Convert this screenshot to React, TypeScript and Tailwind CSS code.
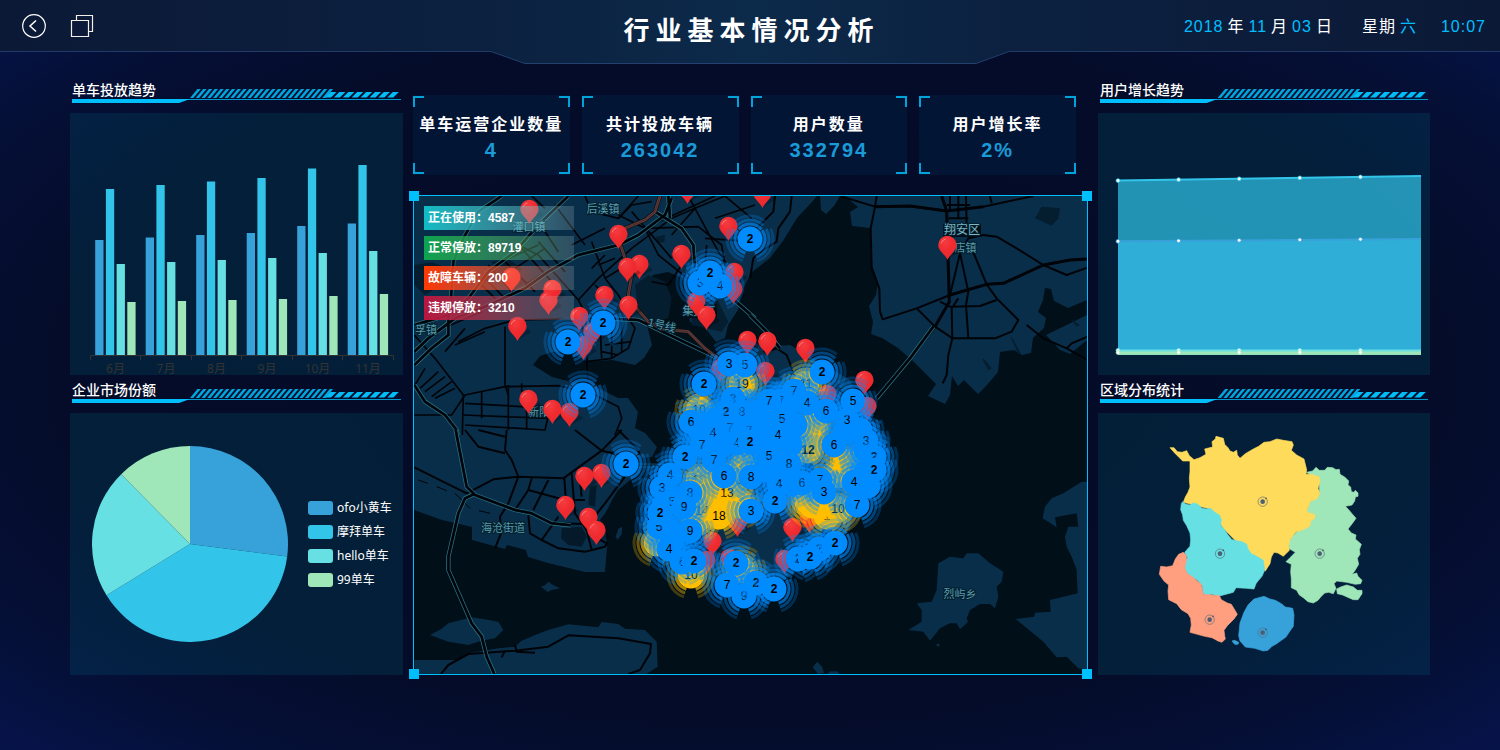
import React from "react";

const ZOOMED = "scale(0.333333)";

/* ---------- shared pieces ---------- */

function TitleRule() {
  const long = Array.from({ length: 24 }, (_, i) => 118 + i * 5.75);
  const short = Array.from({ length: 8 }, (_, i) => 253 + i * 8.9);
  return (
    <svg viewBox="0 0 329 15" preserveAspectRatio="none" className="block h-[15px] w-full" aria-hidden="true">
      {long.map((x) => (
        <path key={x} d={`M${x} 9 L${x + 7.5} 0 H${x + 10.8} L${x + 3.3} 9 Z`} fill="#00a6dd" />
      ))}
      {short.map((x) => (
        <path key={x} d={`M${x} 8.5 L${x + 5.5} 3 H${x + 11.5} L${x + 6} 8.5 Z`} fill="#00bdf8" />
      ))}
      <rect x="0" y="10" width="329" height="1" fill="#0398cb" />
      <path d="M0 10 H118 L107 14 H0 Z" fill="#00bfff" />
    </svg>
  );
}

function Panel({ title, children }: { title: string; children: React.ReactNode }) {
  return (
    <section className="flex flex-col">
      <div className="flex h-[38px] flex-col px-[2px] pt-[5px]">
        <h2 className="h-[9px] text-[14px] leading-[20px] font-medium text-white">{title}</h2>
        <TitleRule />
      </div>
      <div className="flex h-[262px] items-center bg-[#00ffff]/8">{children}</div>
    </section>
  );
}

/* ---------- header ---------- */

const hi = "text-[#00bfff]";

function Header() {
  return (
    <header className="relative h-16">
      <div className="absolute inset-0 flex">
        <div className="h-[52px] flex-1 border-b border-[#213a68] bg-linear-to-r from-[#0b1936] to-[#0c2140]" />
        <svg viewBox="0 0 518 64" preserveAspectRatio="none" className="h-16 w-[518px]" aria-hidden="true">
          <defs>
            <linearGradient id="head" x1="0" x2="1" y1="0" y2="0">
              <stop offset="0" stopColor="#0c2140" />
              <stop offset="0.5" stopColor="#0c2a4a" />
              <stop offset="1" stopColor="#0c2140" />
            </linearGradient>
          </defs>
          <path d="M0 0 H518 V51 L485 63.5 H34 L0 51 Z" fill="url(#head)" />
          <path d="M0 51.5 L34 63.5 H485 L518 51.5" fill="none" stroke="#24406f" />
        </svg>
        <div className="h-[52px] flex-1 border-b border-[#213a68] bg-linear-to-l from-[#0b1936] to-[#0c2140]" />
      </div>
      <div className="relative grid h-[52px] grid-cols-[1fr_auto_1fr] items-center">
        <div className="flex items-center gap-6 pl-[22px]">
          <button aria-label="返回" className="block">
            <svg width="24" height="24" viewBox="0 0 24 24" fill="none" stroke="#fff" strokeWidth="1.2">
              <circle cx="12" cy="12" r="11.3" />
              <path d="M14 6.5 L8 12 L14 17.5" strokeWidth="1.5" />
            </svg>
          </button>
          <button aria-label="窗口" className="block">
            <svg width="24" height="24" viewBox="0 0 24 24" fill="none" stroke="#f4f0e6" strokeWidth="1.2">
              <path d="M1.5 6.5 H18.5 V22.5 H1.5 Z M6.5 6.5 V1.5 H22.5 V17.5 H18.5" />
            </svg>
          </button>
        </div>
        <h1 className="pt-[10px] pl-[3px] text-[26px] leading-[38px] font-bold tracking-[6px] text-white">行业基本情况分析</h1>
        <div className="flex justify-end pt-[2px] pr-[14px] text-[16px] leading-[24px] tracking-[1px] whitespace-nowrap text-white">
          <p className="flex gap-1 pr-[29px]">
            <span className={hi}>2018</span>
            <span>年</span>
            <span className={hi}>11</span>
            <span>月</span>
            <span className={hi}>03</span>
            <span>日</span>
          </p>
          <p className="flex gap-1 pr-6">
            <span>星期</span>
            <span className={hi}>六</span>
          </p>
          <p className={hi}>10:07</p>
        </div>
      </div>
    </header>
  );
}

/* ---------- bar chart ---------- */

const palette = ["#37a2da", "#32c5e9", "#67e0e3", "#9fe6b8"];
const months: [string, number[]][] = [
  ["6月", [115, 166, 91, 53]],
  ["7月", [117.5, 170, 93, 54]],
  ["8月", [120, 173.5, 95, 55]],
  ["9月", [122, 177, 97, 56]],
  ["10月", [129, 186.5, 102, 59]],
  ["11月", [131.5, 190, 104, 61]],
];

function BarChart() {
  return (
    <svg viewBox="0 0 333 262" className="block h-full w-full overflow-visible">
      {months.map(([m, v], i) => (
        <g key={m}>
          {v.map((h, k) => (
            <rect key={k} x={25.2 + i * 50.5 + k * 10.7} y={242 - h} width="8.3" height={h} fill={palette[k]} />
          ))}
          <text
            x={45.5 + i * 50.5}
            y="260"
            textAnchor="middle"
            fill="#333"
            fontSize="12"
            className="font-['Noto_Sans','Noto_Sans_CJK_SC',sans-serif]"
          >
            {m}
          </text>
        </g>
      ))}
      <path
        d="M20.5 247 V242.5 H323.5 V247 M70.5 242 V247 M121.5 242 V247 M171.5 242 V247 M222.5 242 V247 M272.5 242 V247"
        fill="none"
        stroke="#333"
      />
    </svg>
  );
}

/* ---------- pie ---------- */

const shares: [string, number, string][] = [
  ["ofo小黄车", 97.4, "bg-[#37a2da]"],
  ["摩拜单车", 141, "bg-[#32c5e9]"],
  ["hello单车", 77, "bg-[#67e0e3]"],
  ["99单车", 44.6, "bg-[#9fe6b8]"],
];

function PieChart() {
  let a = 0;
  const at = (deg: number) => {
    const r = (deg * Math.PI) / 180;
    return `${98 + 98 * Math.sin(r)} ${98 - 98 * Math.cos(r)}`;
  };
  return (
    <>
      <svg viewBox="0 0 196 196" className="ml-[22px] block h-[196px] w-[196px] shrink-0">
        {shares.map(([name, deg], i) => {
          const d = `M98 98 L${at(a)} A98 98 0 0 1 ${at(a + deg)} Z`;
          a += deg;
          return <path key={name} d={d} fill={palette[i]} />;
        })}
      </svg>
      <ul className="ml-5 flex flex-col gap-[10px] font-['Noto_Sans','Noto_Sans_CJK_SC',sans-serif] text-[12px] leading-[14px] whitespace-nowrap text-white">
        {shares.map(([name, , color]) => (
          <li key={name} className="flex items-center gap-1">
            <span className={`h-[14px] w-[25px] rounded-[3px] ${color}`} />
            {name}
          </li>
        ))}
      </ul>
    </>
  );
}

/* ---------- area chart ---------- */

function AreaChart() {
  const xs = [0, 1, 2, 3, 4].map((i) => 20 + i * 60.6);
  return (
    <svg viewBox="0 0 332 262" className="block h-full w-full">
      <path d="M20 67.5 L323 63 V242 H20 Z" fill="#32c5e9" fillOpacity="0.7" />
      <path d="M20 128.3 L323 126 V242 H20 Z" fill="#2faed8" />
      <path d="M20 237 H323 V242 H20 Z" fill="#9fe6b8" fillOpacity="0.9" />
      <path d="M20 67.5 L323 63" stroke="#32c5e9" strokeWidth="2" />
      <path d="M20 128.3 L323 126" stroke="#37a2da" strokeWidth="2" />
      <path d="M20 237.5 H323" stroke="#67e0e3" strokeWidth="2" />
      <path d="M20 239.8 H323" stroke="#9fe6b8" strokeWidth="2" />
      {xs.map((x, i) => (
        <g key={x} fill="#fff">
          <circle cx={x} cy={67.6 - i * 0.9} r="1.9" stroke="#32c5e9" strokeWidth="0.8" />
          <circle cx={x} cy={128.3 - i * 0.5} r="1.9" stroke="#37a2da" strokeWidth="0.8" />
          <circle cx={x} cy="237.3" r="1.9" stroke="#67e0e3" strokeWidth="0.8" />
          <circle cx={x} cy="239.5" r="1.9" stroke="#9fe6b8" strokeWidth="0.8" />
        </g>
      ))}
    </svg>
  );
}

/* ---------- district map ---------- */

const districts: [string, string][] = [
  [
    "#9fe6b8",
    "M650 292 L668 288 678 277 688 286 704 286 712 277 728 278 738 284 748 283 750 298 764 306 776 318 774 330 782 336 784 350 792 352 796 346 804 354 804 364 796 366 794 378 786 390 766 394 776 404 786 416 798 430 788 444 774 462 784 474 798 480 796 492 814 508 808 524 810 538 802 550 806 568 794 588 786 598 800 594 804 604 816 616 812 626 796 628 770 622 740 618 732 626 738 640 730 656 716 652 704 654 692 666 684 676 670 684 654 680 640 668 628 660 620 646 604 638 604 612 602 590 604 568 588 560 600 548 616 532 596 520 596 498 620 470 650 450 660 430 650 408 660 380 688 360 688 320 660 300 Z",
  ],
  ["#9fe6b8", "M740 642 L752 636 770 630 790 636 802 646 816 646 816 656 804 674 790 674 776 668 758 660 742 656 Z"],
  [
    "#ffdb5c",
    "M240 218 L252 218 262 230 276 232 290 227 298 242 312 254 330 248 348 238 344 222 368 216 366 200 376 192 378 184 400 190 404 208 414 218 420 228 430 232 440 226 442 240 450 250 466 236 490 222 506 214 522 202 540 200 560 192 580 196 606 200 610 210 604 226 620 240 642 252 650 284 648 298 664 298 688 306 690 320 684 340 690 356 680 372 662 378 656 392 650 408 656 414 674 418 674 430 662 438 660 452 648 460 634 466 618 470 600 494 596 512 598 526 580 544 564 534 552 532 544 546 540 566 526 588 516 580 400 460 360 402 280 382 286 366 294 352 300 336 298 310 300 290 300 258 278 258 266 246 254 234 Z",
  ],
  [
    "#67e0e3",
    "M278 380 L288 388 300 390 310 384 324 388 336 400 350 402 362 400 374 412 388 420 394 434 392 450 404 464 414 480 426 494 444 498 456 500 470 508 474 522 484 536 500 544 520 556 524 586 516 604 504 618 498 626 492 642 470 640 438 638 430 652 400 660 384 664 364 658 350 662 340 656 336 630 322 616 306 606 292 596 284 580 286 560 292 548 284 532 300 514 302 494 300 474 290 452 280 436 278 420 272 404 274 386 Z",
  ],
  [
    "#ff9f7f",
    "M280 532 L288 540 290 552 284 578 292 596 308 606 322 618 334 628 340 658 364 660 388 662 394 674 412 684 424 688 434 704 442 718 432 732 412 752 402 766 404 782 406 792 396 802 384 798 366 788 344 784 322 778 300 772 304 750 302 730 294 716 274 704 260 686 236 674 234 648 236 630 222 618 208 598 212 574 230 576 248 572 256 552 266 538 Z",
  ],
  [
    "#37a2da",
    "M522 664 L540 672 556 676 574 686 586 696 608 700 612 720 610 754 600 768 588 786 560 806 546 814 534 826 520 828 494 820 466 816 450 798 446 782 450 744 462 712 474 690 492 672 Z",
  ],
  ["#37a2da", "M426 798 L434 796 446 802 444 808 434 808 Z"],
];
const seats = [
  [518, 380],
  [390, 536],
  [689, 536],
  [359, 734],
  [518, 773],
];

function DistrictMap() {
  return (
    <svg viewBox="0 0 332 262" className="block h-full w-full">
      <g transform={`translate(-8 -38) ${ZOOMED}`}>
        {districts.map(([c, d], i) => (
          <path key={i} d={d} fill={c} stroke={c} strokeWidth="2" strokeLinejoin="round" />
        ))}
        {seats.map(([x, y]) => (
          <g key={`${x}-${y}`}>
            <circle cx={x} cy={y} r="14" fill="none" stroke="#5c6b7c" strokeWidth="2" />
            <circle cx={x} cy={y} r="7" fill="#4f5f73" />
            <circle cx={x + 10} cy={y - 10} r="2.5" fill="#404a5c" />
          </g>
        ))}
      </g>
    </svg>
  );
}

/* ---------- city map ---------- */

const land = [
  "M414 196 H817 L812 202 797 218 783 241 770 258 752 272 742 290 738 310 728 325 725 338 716 342 705 328 690 322 686 300 683 278 668 272 653 275 648 284 637 286 640 302 647 325 652 345 644 358 635 365 612 360 588 362 572 353 552 352 540 356 533 365 552 377 572 382 592 385 618 398 628 398 638 412 635 428 645 433 657 447 652 457 638 458 640 472 618 490 612 500 606 512 600 520 605 527 607 547 605 572 585 572 548 563 528 557 526 550 507 545 505 549 472 540 472 527 442 520 414 510 Z",
  "M820 196 H840 L834 206 826 214 821 210 Z",
  "M845 196 H1087 V300 L1068 308 1054 301 1051 289 1045 288 1043 300 1038 312 1046 318 1044 328 1033 338 1031 353 1022 355 1014 350 1000 352 998 372 987 385 978 394 964 380 958 386 952 376 950 395 945 404 928 396 936 384 930 378 914 362 898 348 882 338 871 334 873 322 869 306 876 295 878 282 871 262 870 228 852 226 850 212 858 207 Z",
  "M1087 315 L1046 335 1060 350 1070 354 1087 340 Z",
  "M722 350 L790 345 850 380 878 440 868 510 830 550 780 582 730 590 690 570 655 540 662 480 690 400 Z",
];

const landSW = [
  "M75 615 L110 596 130 580 200 562 240 568 280 575 295 600 270 625 230 632 190 645 130 635 Z",
  "M408 470 L420 466 430 455 445 466 465 475 440 480 428 486 Z",
  "M28 690 H160 L190 670 280 655 330 650 350 632 390 615 430 600 490 583 580 592 590 576 640 582 660 596 720 600 755 635 758 710 720 735 H28 Z",
  "M632 320 L640 296 652 290 650 312 638 330 Z",
];

const landSE = [
  "M565 400 L600 380 640 385 650 370 685 370 720 400 760 425 755 455 740 470 745 500 735 535 720 522 690 522 660 540 650 565 654 576 630 598 620 580 600 580 570 595 540 632 520 605 475 600 515 575 515 540 500 520 545 515 560 480 Z",
  "M1012 155 L995 155 980 165 940 190 905 205 885 230 878 265 920 292 915 262 980 250 985 290 955 290 945 320 950 350 965 380 980 420 983 490 900 510 902 545 855 548 852 560 797 567 880 635 920 682 950 680 985 715 1012 720 Z",
  "M188 712 L202 695 216 710 222 728 205 733 Z",
  "M232 733 L240 724 262 724 270 733 Z",
  "M558 645 L565 640 570 646 564 650 Z",
];

const waterNW = [
  "M690 300 L730 270 780 290 800 340 790 400 740 410 700 380 Z",
  "M860 290 L930 330 970 410 950 440 860 420 Z",
  "M28 240 L80 232 130 250 110 300 60 330 28 300 Z",
  "M260 230 L310 222 350 250 330 290 280 290 Z",
  "M752 155 L780 150 778 170 760 175 Z",
];
const waterNE = ["M855 100 L875 65 930 70 925 100 905 122 Z", "M700 520 L725 550 715 556 698 525 Z", "M785 455 L812 505 805 508 783 458 Z", "M960 400 L990 420 980 425 Z"];
const coveSW = ["M470 295 L530 290 545 320 530 350 490 345 468 325 Z", "M555 170 L575 165 570 230 550 225 Z"];

const highwaysNW = [
  "M290 33 L220 80 175 160 145 230 138 340",
  "M490 33 L400 120 330 200 250 260 190 340 130 390 28 420",
  "M800 40 L780 90 700 150 640 180 520 210 430 260 360 310 240 365 150 400 70 460 28 500",
  "M750 80 L830 130 865 180 870 250 880 300",
  "M790 33 L795 100",
  "M970 330 L1050 400",
  "M600 400 L700 405 940 520",
  "M28 600 L60 650 120 690 155 735 158 750",
  "M130 390 L130 450 80 490 28 540",
];
const highwaysSW = ["M152 0 L185 170 210 195 330 240 380 250 440 280 497 286", "M208 192 L180 205 160 250 130 380 130 420 200 580 230 620 245 680 268 732"];
const highwaysNE = ["M0 390 L50 440 90 490", "M550 425 L480 520 380 640"];

const roadsNW = [
  "M160 470 L240 430 330 405 490 402 600 400",
  "M300 425 L300 600 310 630",
  "M28 450 L90 520 175 630 172 750",
  "M28 690 L140 690 180 630 300 605 460 602 560 625 640 665 650 700 630 750",
  "M180 655 L440 670 M176 690 L430 700 M180 720 L420 735 440 650 M230 620 V700 M310 600 V735 M365 650 V735 M350 595 V620",
  "M45 610 L100 560 M60 620 L120 575 M80 635 L140 590 M90 640 L150 610 M60 550 L30 600",
  "M520 345 L580 280 680 190 800 100 870 70 960 33",
  "M520 345 L400 210 340 180 M520 345 L560 420 545 530 550 600",
  "M540 33 L560 80 640 100 680 60 740 50",
  "M640 90 L720 130 760 210 860 290 M720 130 L880 125 950 180 960 240",
  "M700 33 L640 100 M850 33 L940 200 1000 290 M870 70 L800 150 M680 80 L800 220 M740 120 L930 33",
  "M560 170 L600 280 640 330 680 400 M600 210 L560 250 M580 240 L630 220 M600 280 L650 250 M570 300 L620 350",
  "M585 420 L590 520 M620 420 V520 M650 410 V500 M600 480 L680 470 M590 500 L640 510",
  "M545 530 L620 520 670 490 690 430 670 400",
  "M200 330 L290 230 400 180 M250 240 L330 330 M290 220 L390 320 M350 190 L440 290 M220 290 L280 350 M330 250 L420 190 M360 300 L440 250 M400 170 L480 260 M230 270 L300 340",
  "M380 33 L420 70 M450 60 L540 180 M500 180 L600 130 M420 140 L460 200",
  "M90 440 L230 380 M150 480 L240 440 M120 500 L180 430",
  "M900 160 L1050 170 M960 33 L1040 100 M930 100 L1050 60 M905 180 L900 240",
  "M830 240 L790 300 740 290",
];
const roadsNE = [
  "M270 33 L375 65 480 63 590 78 700 65 850 33",
  "M380 33 L375 65 362 130 365 250 388 310 390 380 398 403 500 370 600 330 710 298 760 295 880 240 960 225 1012 222",
  "M575 33 L590 78 598 350 555 425 480 520 380 640",
  "M600 33 V80 M625 33 V100 M648 33 L650 130 M590 60 H660 M595 100 H655 M720 33 L725 55",
  "M640 185 L655 160 700 150 740 155 800 190 880 240 950 270 1012 248",
  "M630 205 L600 330 M630 205 L655 320 648 360 655 460 M665 190 L710 298 740 340 805 405 785 440 735 460 H608 L555 425 500 370",
  "M570 350 L600 365 690 363 740 345 M625 340 L605 370 607 460 595 510 590 570 578 595",
  "M830 420 L880 460 950 490 1012 525 M950 490 L965 475 1012 455",
  "M125 33 L120 80 85 130 80 170 40 195 10 220 0 280 M75 33 L70 80 20 130",
  "M40 500 L80 490 110 510 130 560",
];
const trunkNE = ["M375 65 L480 63 590 78 700 65", "M575 33 L590 78 598 350 555 425 480 520", "M600 330 L710 298 760 295 880 240 960 225 1012 222"];
const roadsSW = [
  "M28 112 L185 190 265 148 340 140 475 145 590 62 650 0",
  "M340 140 L320 90 300 60 305 0 M340 140 L310 220 285 260 288 310 270 355",
  "M180 0 L220 50 300 70 M220 0 L300 20",
  "M510 0 L590 62 650 75 700 85 M640 0 L700 60 705 90",
  "M380 145 L370 180 330 240 M430 150 L385 240 M370 180 L480 210 540 210 M478 145 L482 200 M500 130 L510 250 545 300",
  "M370 255 L375 310 410 330 460 355 540 365 600 350 605 340 570 320 M460 260 L410 330 M545 300 L560 360 M525 150 L530 200",
  "M440 280 L540 282 M545 290 L600 220 660 140",
  "M108 732 L130 705 190 672 330 662 430 650 490 616 640 625 738 642 735 670 705 720 670 732",
  "M330 645 L335 665 390 668 M300 662 L290 682",
];
const railSW = ["M40 150 L68 160 M95 170 L125 182 M150 190 L195 235 M222 242 L255 250"];
const metro = ["M765 33 L750 80 720 105 660 130 640 160 660 220 680 270 670 330 695 370 730 410 770 432 850 440 900 490 945 525"];

const NW = `translate(405 185) ${ZOOMED}`;
const NE = `translate(750 185) ${ZOOMED}`;
const SW = `translate(405 430) ${ZOOMED}`;
const SE = `translate(750 430) ${ZOOMED}`;

function Lines({ at, paths, color, width }: { at: string; paths: string[]; color: string; width: number }) {
  return (
    <g transform={at} fill="none" stroke={color} strokeWidth={width} strokeLinejoin="round">
      {paths.map((d) => (
        <path key={d} d={d} />
      ))}
    </g>
  );
}

function Shapes({ at, paths, color }: { at?: string; paths: string[]; color: string }) {
  return (
    <g transform={at} fill={color}>
      {paths.map((d) => (
        <path key={d} d={d} />
      ))}
    </g>
  );
}

const pins = [
  [529, 209], [618, 234], [639, 264], [627, 267], [681, 254], [728, 226], [687, 189], [762, 193], [511, 277],
  [552, 289], [548, 300], [604, 295], [592, 331], [583, 345], [579, 316], [628, 305], [517, 326], [734, 272], [733, 289],
  [696, 301], [706, 315], [747, 340], [767, 341], [765, 371], [720, 368], [805, 348], [867, 406], [864, 380], [827, 394],
  [528, 399], [552, 409], [569, 412], [947, 245], [601, 473], [584, 476], [565, 505], [588, 517], [596, 530],
  [712, 541], [729, 558], [737, 522], [809, 518], [792, 527], [784, 559], [858, 452], [706, 560],
];

const yellow: [number, number, string][] = [
  [742, 384, "19"], [699, 410, "10"], [806, 384, "11"], [808, 434, "4"], [752, 457, "10"], [699, 480, "10"],
  [657, 543, ""], [807, 500, ""], [838, 475, ""], [712, 498, ""], [691, 575, "10"], [735, 500, ""], [742, 570, ""],
  [705, 490, ""], [742, 468, ""], [697, 520, ""], [740, 505, ""], [815, 425, ""], [846, 462, ""], [812, 505, ""],
  [702, 511, "14"], [727, 493, "13"], [719, 516, "18"], [808, 450, "12"], [827, 516, "1"], [838, 509, "10"],
];

const blue: [number, number, string][] = [
  [700, 430, ""], [716, 420, ""], [762, 432, ""], [771, 418, ""], [795, 425, ""], [758, 412, ""], [868, 486, ""],
  [845, 432, ""], [860, 430, ""], [790, 445, ""], [668, 530, ""], [765, 470, ""], [785, 475, ""], [723, 445, ""],
  [706, 424, ""], [735, 420, ""], [764, 445, ""], [788, 405, ""], [766, 412, ""], [866, 450, ""], [866, 472, ""],
  [664, 505, ""], [672, 540, ""], [792, 484, ""], [710, 440, ""], [786, 432, ""], [774, 447, ""],
  [745, 365, "5"], [729, 364, "3"], [704, 384, "2"], [794, 391, "7"], [733, 399, "3"], [781, 401, "7"], [822, 372, "2"],
  [742, 412, "8"], [726, 412, "2"], [769, 401, "7"], [807, 403, "4"], [826, 411, "6"], [847, 420, "3"], [853, 401, "5"],
  [691, 422, "6"], [782, 419, "5"], [730, 428, "7"], [749, 431, "7"], [778, 435, "4"], [737, 443, "4"], [713, 433, "4"],
  [750, 442, "2"], [702, 445, "7"], [685, 457, "2"], [769, 456, "5"], [714, 460, "7"], [789, 464, "8"], [834, 445, "6"],
  [866, 441, "3"], [874, 457, "2"], [874, 470, "2"], [751, 477, "8"], [724, 476, "6"], [670, 475, "4"], [662, 488, "3"],
  [802, 483, "6"], [779, 484, "4"], [820, 480, "7"], [824, 492, "3"], [690, 493, "8"], [672, 502, "5"], [684, 507, "9"],
  [659, 527, "5"], [660, 513, "2"], [775, 501, "2"], [751, 511, "3"], [857, 505, "7"], [854, 482, "4"], [690, 531, "9"],
  [682, 562, "6"], [669, 549, "4"], [694, 561, "2"], [736, 563, "2"], [798, 559, "2"], [819, 549, "2"], [810, 557, "2"],
  [835, 543, "2"], [744, 596, "9"], [727, 585, "7"], [756, 583, "2"], [774, 589, "2"], [700, 283, "3"], [720, 286, "4"],
  [710, 273, "2"], [750, 239, "2"], [603, 323, "2"], [568, 342, "2"], [583, 395, "2"], [626, 464, "2"],
];

function arc(r: number, from: number, to: number) {
  const p = (deg: number) => {
    const t = (deg * Math.PI) / 180;
    return `${(r * Math.sin(t)).toFixed(2)} ${(-r * Math.cos(t)).toFixed(2)}`;
  };
  return `M${p(from)} A${r} ${r} 0 0 1 ${p(to)}`;
}

const rings: [number, number, string][] = [
  [15, 0.65, arc(15, -50, 50) + arc(15, 54, 162) + arc(15, 198, 306)],
  [19, 0.42, arc(19, -44, 44) + arc(19, 58, 162) + arc(19, 198, 302)],
  [23, 0.25, arc(23, -40, 40) + arc(23, 64, 162) + arc(23, 198, 296)],
];

function Cluster({ x, y, n, color, core }: { x: number; y: number; n: string; color: string; core: number }) {
  return (
    <g transform={`translate(${x} ${y})`}>
      {rings.map(([r, o, d]) => (
        <path key={r} d={d} fill="none" stroke={color} strokeWidth="3" strokeOpacity={o} />
      ))}
      <circle r={core} fill={color} />
      {n && (
        <text y="4" textAnchor="middle" fontSize="12" fill="#000" fontWeight={n === "2" || n === "12" ? 700 : 400}>
          {n}
        </text>
      )}
    </g>
  );
}

const places: [number, number, string][] = [
  [603, 213, "后溪镇"], [529, 231, "灌口镇"], [426, 334, "孚镇"], [699, 315, "集美区"], [539, 416, "新阳"],
  [960, 252, "新店镇"], [503, 532, "海沧街道"], [960, 598, "烈屿乡"],
];

function CityMap() {
  return (
    <svg
      viewBox="414 196 673 478"
      preserveAspectRatio="xMidYMid slice"
      className="block h-full w-full font-['Liberation_Sans','Noto_Sans_CJK_SC',sans-serif]"
    >
      <defs>
        <radialGradient id="pin" cx="0.4" cy="0.25" r="0.8">
          <stop offset="0" stopColor="#f43c40" />
          <stop offset="0.5" stopColor="#ef2b2f" />
          <stop offset="1" stopColor="#ea282c" />
        </radialGradient>
      </defs>
      <rect x="414" y="196" width="673" height="478" fill="#010f18" />
      <Shapes paths={land} color="#092e49" />
      <Shapes at={SW} paths={landSW} color="#092e49" />
      <Shapes at={SE} paths={landSE} color="#092e49" />
      <Shapes at={NW} paths={waterNW} color="#041d2f" />
      <Shapes at={NE} paths={waterNE} color="#041d2f" />
      <Shapes at={SW} paths={coveSW} color="#04192a" />

      <Lines at={NW} paths={roadsNW} color="#000307" width={5} />
      <Lines at={NE} paths={roadsNE} color="#000307" width={6} />
      <Lines at={NE} paths={trunkNE} color="#000307" width={9} />
      <Lines at={SW} paths={roadsSW} color="#000307" width={6} />
      <Lines at={SW} paths={railSW} color="#000307" width={3} />
      {[
        { at: NW, p: highwaysNW },
        { at: SW, p: highwaysSW },
        { at: NE, p: highwaysNE },
      ].map(({ at, p }) => (
        <g key={at}>
          <Lines at={at} paths={p} color="#2f7480" width={13} />
          <Lines at={at} paths={p} color="#062034" width={9} />
          <Lines at={at} paths={p} color="#000307" width={6} />
        </g>
      ))}
      <Lines at={NW} paths={metro} color="#08141f" width={13} />
      <Lines at={NW} paths={metro} color="#6b3a34" width={8} />
      <Lines at={NW} paths={metro} color="#2c2527" width={2} />
      <path d="M634 464 H670 M634 467 H670" stroke="#164050" />

      <rect x="943" y="224" width="38" height="13" fill="#010d16" />
      <rect x="681" y="304" width="36" height="14" fill="#010d16" />
      <g fontSize="11" textAnchor="middle" fill="#5a9cab" stroke="#03202f" strokeWidth="2" paintOrder="stroke">
        {places.map(([x, y, t]) => (
          <text key={t} x={x} y={y}>
            {t}
          </text>
        ))}
        <text x="962" y="234" fontSize="12" fill="#7db4c2">
          翔安区
        </text>
        <text transform="translate(661 329) rotate(14)">1号线</text>
      </g>

      {pins.map(([x, y]) => (
        <g key={`${x}-${y}`} transform={`translate(${x} ${y})`}>
          <path d="M1 14 L11 3 14 6 Z" fill="#000" fillOpacity="0.25" />
          <path d="M0.5 15 C-2 9 -8.8 6 -8.8 0 A9.2 9.2 0 0 1 9.6 0 C9.6 6 3 9 0.5 15 Z" fill="url(#pin)" />
          <path d="M-6 -1.5 A6.5 6.5 0 0 1 -1.5 -6" fill="none" stroke="#fa8f8f" strokeWidth="0.8" />
        </g>
      ))}
      {yellow.map(([x, y, n]) => (
        <Cluster key={`${x}-${y}`} x={x} y={y} n={n} color="#ffbf00" core={13.5} />
      ))}
      {blue.map(([x, y, n]) => (
        <Cluster key={`${x}-${y}`} x={x} y={y} n={n} color="#008cff" core={12.5} />
      ))}
    </svg>
  );
}

/* ---------- centre column ---------- */

const stats = [
  ["单车运营企业数量", "4"],
  ["共计投放车辆", "263042"],
  ["用户数量", "332794"],
  ["用户增长率", "2%"],
];

const corners = [
  "top-0 left-0 border-t-2 border-l-2",
  "top-0 right-0 border-t-2 border-r-2",
  "bottom-0 left-0 border-b-2 border-l-2",
  "right-0 bottom-0 border-r-2 border-b-2",
];

const statuses = [
  ["正在使用：4587", "from-[#10bcc5]"],
  ["正常停放：89719", "from-[#0ba44e]"],
  ["故障车辆：200", "from-[#ff3a00]"],
  ["违规停放：3210", "from-[#b9163f]"],
];

const handles = ["-top-[5px] -left-[5px]", "-top-[5px] -right-[5px]", "-bottom-[5px] -left-[5px]", "-right-[5px] -bottom-[5px]"];

export default function App() {
  return (
    <div className="min-h-screen bg-[radial-gradient(ellipse_at_center,#040b27_0%,#040c29_65%,#051038_85%,#06134a_100%)] font-['Liberation_Sans','Noto_Sans_CJK_SC',sans-serif]">
      <Header />
      <main className="grid grid-cols-[333fr_675fr_332fr] gap-[10px] px-[70px] pt-[11px] pb-[75px]">
        <div className="flex flex-col">
          <Panel title="单车投放趋势">
            <BarChart />
          </Panel>
          <Panel title="企业市场份额">
            <PieChart />
          </Panel>
        </div>

        <div className="flex flex-col gap-5 pt-5">
          <ul className="grid grid-cols-4 gap-3 pr-3">
            {stats.map(([label, value]) => (
              <li key={label} className="relative flex h-20 flex-col items-center bg-[#021534] pt-[18px] tracking-[2px] whitespace-nowrap">
                {corners.map((c) => (
                  <span key={c} className={`absolute my-px h-[11px] w-[11px] border-[#00a3da] ${c}`} />
                ))}
                <span className="text-[16px] leading-[23px] font-bold text-white">{label}</span>
                <span className="text-[20px] leading-[28px] font-bold text-[#1a9bd7]">{value}</span>
              </li>
            ))}
          </ul>
          <div className="relative h-[480px] border border-[#00bfff]">
            <CityMap />
            <ul className="absolute top-[10px] left-[10px] flex w-[150px] flex-col gap-[6px] text-[12px] leading-[24px] font-bold text-white">
              {statuses.map(([t, c]) => (
                <li key={t} className={`h-6 bg-linear-to-r to-white/15 pl-1 ${c}`}>
                  {t}
                </li>
              ))}
            </ul>
            {handles.map((h) => (
              <span key={h} className={`absolute h-[10px] w-[10px] bg-[#00bfff] ${h}`} />
            ))}
          </div>
        </div>

        <div className="flex flex-col">
          <Panel title="用户增长趋势">
            <AreaChart />
          </Panel>
          <Panel title="区域分布统计">
            <DistrictMap />
          </Panel>
        </div>
      </main>
    </div>
  );
}
